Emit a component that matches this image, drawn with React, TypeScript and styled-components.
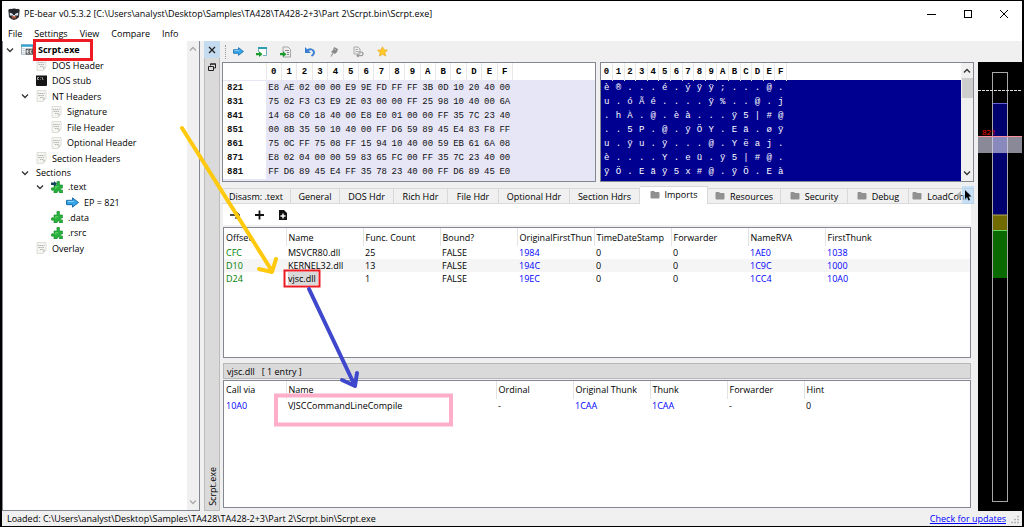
import React from "react";
import styled, { createGlobalStyle, css } from "styled-components";

const GlobalStyle = createGlobalStyle`
  *, *::before, *::after { box-sizing: border-box; }
  body { margin: 0; background: #000; }
  button { font: inherit; color: inherit; border: 0; padding: 0; background: none; }
  ul { list-style: none; margin: 0; padding: 0; }
`;

const Window = styled.div`
  position: relative;
  display: flex;
  flex-direction: column;
  height: 100vh;
  min-height: 420px;
  border: solid #000;
  border-width: 1px 2px 1px 2px;
  background: #f0f0f0;
  color: #000;
  font-family: "Open Sans", "Noto Sans", sans-serif;
  font-size: 9px;
  line-height: 13px;
  white-space: nowrap;
  overflow: hidden;
`;

const TitleBar = styled.header`
  display: flex;
  align-items: center;
  gap: 4px;
  height: 25px;
  padding-left: 6px;
  background: #fff;
`;

const Title = styled.h1`
  flex: 1;
  margin: 0;
  font-size: 9px;
  font-weight: 400;
`;

const WindowControls = styled.div`
  display: flex;
`;

const WindowButton = styled.button`
  display: grid;
  place-items: center;
  width: 36px;
  height: 24px;
`;

const MenuBar = styled.nav`
  display: flex;
  gap: 12px;
  height: 15px;
  padding-left: 6px;
  background: #fff;
`;

const Body = styled.div`
  display: flex;
  flex: 1;
  min-height: 0;
`;

const TreePanel = styled.aside`
  display: flex;
  width: 198px;
  border: solid #828790;
  border-width: 0 1px 1px 1px;
  background: #fff;
`;

const TreeLists = styled.div`
  flex: 1;
  padding-top: 1px;
`;

const TreeGroup = styled.ul<{ $height: number }>`
  display: grid;
  grid-auto-rows: 1fr;
  height: ${(p) => p.$height}px;
`;

const TreeRow = styled.li<{ $level: number; $bold?: boolean }>`
  display: flex;
  align-items: center;
  gap: 5px;
  padding-left: ${(p) => 3 + p.$level * 15}px;
  font-weight: ${(p) => (p.$bold ? 700 : 400)};
`;

const Twisty = styled.span`
  display: flex;
  width: 10px;
`;

const ScrollTrack = styled.div`
  display: flex;
  flex-direction: column;
  align-items: center;
  width: 12px;
  padding: 4px 0;
  background: #f0f0f0;
`;

const ScrollSpace = styled.div`
  flex: 1;
`;

const ScrollThumb = styled.div`
  width: 11px;
  height: 20px;
  margin-top: 3px;
  background: #cdcdcd;
`;

const DockStrip = styled.div`
  display: flex;
  flex-direction: column;
  align-items: center;
  width: 16px;
  margin-left: 4px;
  border: 1px solid #bcbcbc;
  border-top: 0;
  background: #dadada;
`;

const DockButton = styled.button<{ $hot?: boolean }>`
  display: grid;
  place-items: center;
  width: 16px;
  height: 17px;
  background: ${(p) => (p.$hot ? "#c5dcf0" : "transparent")};
`;

const DockLabel = styled.span`
  margin-top: auto;
  padding-top: 4px;
  writing-mode: vertical-rl;
  transform: rotate(180deg);
`;

const Workspace = styled.main`
  display: flex;
  flex: 1;
  flex-direction: column;
  min-width: 0;
  margin: 0 4px 3px 2px;
`;

const ToolBar = styled.div`
  display: flex;
  align-items: center;
  height: 21px;
  padding-left: 3px;
`;

const Grip = styled.span`
  height: 14px;
  border-left: 1px dotted #999;
`;

const ToolButton = styled.button`
  display: grid;
  place-items: center;
  width: 24px;
  height: 18px;
`;

const HexRow = styled.section`
  display: flex;
  gap: 4px;
  height: 120px;
`;

const HexPanel = styled.div<{ $fill: string }>`
  display: flex;
  flex: 1;
  min-width: 0;
  border: 1px solid #828790;
  background: linear-gradient(#fff 17px, ${(p) => p.$fill} 17px);
  overflow: hidden;
`;

const HexView = styled.div`
  flex: 1;
`;

const HexTable = styled.table<{ $width: number; $ascii?: boolean }>`
  width: ${(p) => p.$width}px;
  table-layout: fixed;
  border-collapse: collapse;
  font-family: "Liberation Mono", monospace;
  font-size: 9px;
  line-height: 14px;
  color: ${(p) => (p.$ascii ? "#fff" : "#111")};
  th, td { padding: 0; text-align: center; }
  td { height: 14px; }
  thead th { height: 18px; border-right: 1px solid #e8e8e8; color: #000; }
  tbody th { padding-left: 4px; text-align: left; background: #fff; }
`;

const OffsetHead = styled.th`
  width: 43px;
`;

const Tabs = styled.div`
  position: relative;
  display: flex;
  align-items: flex-end;
  height: 19px;
  margin-top: 3px;
`;

const Tab = styled.button<{ $width: number; $active?: boolean }>`
  display: flex;
  flex: none;
  align-items: center;
  justify-content: center;
  gap: 5px;
  width: ${(p) => p.$width}px;
  height: 16px;
  border: 1px solid #d9d9d9;
  border-left: 0;
  ${(p) =>
    p.$active &&
    css`
      height: 18px;
      padding-bottom: 2px;
      border-bottom: 0;
      background: #fff;
    `}
`;

const TabScroller = styled.div`
  position: absolute;
  right: 0;
  bottom: 0;
  display: flex;
  height: 18px;
`;

const ScrollerButton = styled.button<{ $hot?: boolean }>`
  display: grid;
  place-items: center;
  width: ${(p) => (p.$hot ? 12 : 8)}px;
  background: ${(p) => (p.$hot ? "rgba(150, 205, 250, 0.45)" : "transparent")};
`;

const TabPage = styled.section`
  display: flex;
  flex: 1;
  flex-direction: column;
  min-height: 0;
  margin-right: 3px;
  margin-left: 1px;
`;

const ImportTools = styled.div`
  display: flex;
  align-items: center;
  height: 21px;
  margin-bottom: 2px;
  background: #fff;
`;

const Frame = styled.div<{ $grow: number }>`
  flex: ${(p) => p.$grow} 1 0;
  min-height: 0;
  border: 1px solid #828790;
  background: #fff;
  overflow: hidden;
`;

const Caption = styled.div`
  height: 16px;
  margin: 5px 0 1px;
  padding: 0 3px;
  border: 1px solid #b8b8b8;
  background: #dadada;
  line-height: 15px;
  white-space: pre;
`;

const DataTable = styled.table`
  width: 100%;
  table-layout: fixed;
  border-collapse: collapse;
  th, td { padding: 0 2px; text-align: left; font-weight: 400; }
  th { height: 18px; border-right: 1px solid #e3e3e3; }
  th:last-child { border-right: 0; }
  td { height: 13px; }
  tbody tr:nth-child(even) { background: #f5f5f5; }
`;

const Col = styled.col<{ $width?: number }>`
  width: ${(p) => (p.$width ? `${p.$width}px` : "auto")};
`;

const Cell = styled.td<{ $tone: string }>`
  color: ${(p) => p.$tone};
`;

const Picked = styled.span`
  display: inline-block;
  padding-right: 2px;
  background: #d9d9d9;
`;

const MapPanel = styled.aside`
  width: 44px;
  margin-top: 21px;
  background: #000;
  overflow: hidden;
`;

const StatusBar = styled.footer`
  display: flex;
  align-items: center;
  height: 15px;
  padding: 0 2px 0 5px;
`;

const StatusText = styled.span`
  flex: 1;
`;

const UpdateLink = styled.a`
  margin-right: 4px;
  color: #0000ff;
  text-decoration: underline;
`;

const Marks = styled.svg`
  position: absolute;
  top: -1px;
  left: -2px;
  pointer-events: none;
`;

const BearIcon = () => (
  <svg width="12" height="12" viewBox="0 0 12 12">
    <circle cx="2.2" cy="2.6" r="1.9" fill="#333" />
    <circle cx="9.8" cy="2.6" r="1.9" fill="#333" />
    <path d="M.5 4Q2 .5 6 .5T11.500 4L11 9Q8.500 12 6 12T1 9Z" fill="#24262b" />
    <path d="M1.800 4.500 5 6V7.500H1.800zM10.200 4.500 7 6V7.500H10.200z" fill="#d9e4ee" />
    <path d="M3.500 8H8.500L8 10.500H4z" fill="#a5553c" />
    <path d="M4.800 7H7.200L6 9z" fill="#eee" />
  </svg>
);

const Chevron = ({ up, color = "#333" }: { up?: boolean; color?: string }) => (
  <svg width="8" height="8" viewBox="0 0 8 8">
    <path d={up ? "M1 5.500 4 2.500 7 5.500" : "M1 2.500 4 5.500 7 2.500"} fill="none" stroke={color} strokeWidth="1.300" />
  </svg>
);

const ExeIcon = () => (
  <svg width="12" height="12" viewBox="0 0 13 12">
    <rect x="0.500" y="0.500" width="12" height="10" fill="#fff" stroke="#9aa7b3" />
    <path d="M0 0H13V2.500H0z" fill="#35a3d0" />
    <path d="M1.500 4.500H4M1.500 6.500H4M1.500 8.500H4" stroke="#b7c6d2" />
    <rect x="5" y="4.500" width="8" height="6.500" fill="#555" />
    <path d="M6.500 6V9.500M8.500 6H7V9.500H8.500M7 7.700H8.500M10 6V9.500M12 6H10.500V9.500H12" stroke="#fff" strokeWidth="0.700" fill="none" />
  </svg>
);

const PageIcon = () => (
  <svg width="11" height="12" viewBox="0 0 11 12">
    <path d="M1 .5H10V8L7 11.500H1z" fill="#f4f4f0" stroke="#d8d8d4" strokeWidth="0.800" />
    <path d="M2 3.500H8.500M2.500 5.500H8.500M4 7.500H8" stroke="#b4b4b4" strokeDasharray="1.500 .5" />
    <path d="M10 8H7V11.500z" fill="#d2d2ce" />
  </svg>
);

const StubIcon = () => (
  <svg width="11" height="11" viewBox="0 0 11 11">
    <rect width="11" height="11" rx="1" fill="#151515" />
    <path d="M0 .5H11" stroke="#888" />
    <path d="M3 2.500H1.500V4.500H3M4.500 2.500V3M4.500 4V4.500M6 2 7 5" stroke="#ddd" strokeWidth="0.700" fill="none" />
  </svg>
);

const PuzzleIcon = ({ entry }: { entry?: boolean }) => (
  <svg width="12" height="12" viewBox="0 0 12 12">
    <path d="M4 4H6V2.500Q5.200 0 7.200 0T8.500 2.500V4H11.500V7Q9.500 6.500 9.500 8T11.500 9V12H8.500Q8.800 10 7.300 10T6 12H3V9Q0 10 0 8T3 7V4z" fill="#28b13c" stroke="#14852a" strokeWidth="0.600" />
    <path d="M4 5H8L4 8z" fill="#66d56c" opacity=".7" />
    {entry && <path d="M0 1.500H3V0L6 2.700 3 5.500V4H0z" fill="#16425f" />}
  </svg>
);

const ArrowIcon = ({ size }: { size: number }) => (
  <svg width={size} height={size - 2} viewBox="0 0 12 10">
    <path d="M.5 3H6V.7L11.500 5 6 9.300V7H.5z" fill="#35a5ea" stroke="#176aa8" strokeWidth="0.900" />
    <path d="M1.500 4H7" stroke="#8fd3fa" />
  </svg>
);

const GreenArrow = () => <path d="M0 7H3V5.200L6.500 8.200 3 11V9.300H0z" fill="#189a2c" />;

const FolderIcon = () => (
  <svg width="10" height="8" viewBox="0 0 10 8">
    <path d="M.5 1Q.5 0 1.500 0H4L5 1H8.500Q9.500 1 9.500 2V6.500Q9.500 7.500 8.500 7.500H1.500Q.5 7.500.5 6.500z" fill="#919191" />
  </svg>
);

type TreeItem = { text: string; level: number; open?: boolean; bold?: boolean; icon?: React.ReactNode };

const headerItems: TreeItem[] = [
  { text: "Scrpt.exe", level: 0, open: true, bold: true, icon: <ExeIcon /> },
  { text: "DOS Header", level: 1, icon: <PageIcon /> },
  { text: "DOS stub", level: 1, icon: <StubIcon /> },
  { text: "NT Headers", level: 1, open: true, icon: <PageIcon /> },
  { text: "Signature", level: 2, icon: <PageIcon /> },
  { text: "File Header", level: 2, icon: <PageIcon /> },
  { text: "Optional Header", level: 2, icon: <PageIcon /> },
  { text: "Section Headers", level: 1, icon: <PageIcon /> },
];

const sectionItems: TreeItem[] = [
  { text: ".text", level: 2, open: true, icon: <PuzzleIcon entry /> },
  { text: "EP = 821", level: 3, icon: <ArrowIcon size={13} /> },
  { text: ".data", level: 2, icon: <PuzzleIcon /> },
  { text: ".rsrc", level: 2, icon: <PuzzleIcon /> },
  { text: "Overlay", level: 1, icon: <PageIcon /> },
];

const renderItem = (item: TreeItem) => (
  <TreeRow key={item.text} $level={item.level} $bold={item.bold}>
    <Twisty>{item.open && <Chevron />}</Twisty>
    {item.icon}
    <span>{item.text}</span>
  </TreeRow>
);

const digits = "0123456789ABCDEF".split("");

const hexLines: [string, string][] = [
  ["821", "E8 AE 02 00 00 E9 9E FD FF FF 3B 0D 10 20 40 00"],
  ["831", "75 02 F3 C3 E9 2E 03 00 00 FF 25 98 10 40 00 6A"],
  ["841", "14 68 C0 18 40 00 E8 E0 01 00 00 FF 35 7C 23 40"],
  ["851", "00 8B 35 50 10 40 00 FF D6 59 89 45 E4 83 F8 FF"],
  ["861", "75 0C FF 75 08 FF 15 94 10 40 00 59 EB 61 6A 08"],
  ["871", "E8 02 04 00 00 59 83 65 FC 00 FF 35 7C 23 40 00"],
  ["881", "FF D6 89 45 E4 FF 35 78 23 40 00 FF D6 89 45 E0"],
];

const asciiLines = [
  "è®...é.ýÿÿ;...@.",
  "u.óÃé....ÿ%..@.j",
  ".hÀ.@.èà...ÿ5|#@",
  "..5P.@.ÿÖY.Eä.øÿ",
  "u.ÿu.ÿ...@.Yëaj.",
  "è....Y.eü.ÿ5|#@.",
  "ÿÖ.Eäÿ5x#@.ÿÖ.Eà",
];

const tabs: { text: string; width: number; folder?: boolean; active?: boolean }[] = [
  { text: "Disasm: .text", width: 69 },
  { text: "General", width: 49 },
  { text: "DOS Hdr", width: 54 },
  { text: "Rich Hdr", width: 54 },
  { text: "File Hdr", width: 51 },
  { text: "Optional Hdr", width: 71 },
  { text: "Section Hdrs", width: 70 },
  { text: "Imports", width: 68, folder: true, active: true },
  { text: "Resources", width: 73, folder: true },
  { text: "Security", width: 67, folder: true },
  { text: "Debug", width: 61, folder: true },
  { text: "LoadConfi", width: 65, folder: true },
];

const BLUE = "#0000ff";
const GREEN = "#008000";

type Column = { title: string; width?: number; tone?: string };

const libraryColumns: Column[] = [
  { title: "Offset", width: 62, tone: GREEN },
  { title: "Name", width: 77 },
  { title: "Func. Count", width: 77 },
  { title: "Bound?", width: 77 },
  { title: "OriginalFirstThun", width: 77, tone: BLUE },
  { title: "TimeDateStamp", width: 77 },
  { title: "Forwarder", width: 77 },
  { title: "NameRVA", width: 77, tone: BLUE },
  { title: "FirstThunk", tone: BLUE },
];

const libraryRows = [
  ["CFC", "MSVCR80.dll", "25", "FALSE", "1984", "0", "0", "1AE0", "1038"],
  ["D10", "KERNEL32.dll", "13", "FALSE", "194C", "0", "0", "1C9C", "1000"],
  ["D24", "vjsc.dll", "1", "FALSE", "19EC", "0", "0", "1CC4", "10A0"],
];

const functionColumns: Column[] = [
  { title: "Call via", width: 62, tone: BLUE },
  { title: "Name", width: 210 },
  { title: "Ordinal", width: 77 },
  { title: "Original Thunk", width: 77, tone: BLUE },
  { title: "Thunk", width: 77, tone: BLUE },
  { title: "Forwarder", width: 77 },
  { title: "Hint" },
];

const functionRows = [["10A0", "VJSCCommandLineCompile", "-", "1CAA", "1CAA", "-", "0"]];

const Grid = ({ columns, rows, picked }: { columns: Column[]; rows: string[][]; picked?: string }) => (
  <DataTable>
    <colgroup>
      {columns.map((c) => (
        <Col key={c.title} $width={c.width} />
      ))}
    </colgroup>
    <thead>
      <tr>
        {columns.map((c) => (
          <th key={c.title} scope="col">{c.title}</th>
        ))}
      </tr>
    </thead>
    <tbody>
      {rows.map((row) => (
        <tr key={row[0]}>
          {row.map((value, i) => (
            <Cell key={i} $tone={columns[i].tone ?? "#000"}>
              {value === picked ? <Picked>{value}</Picked> : value}
            </Cell>
          ))}
        </tr>
      ))}
    </tbody>
  </DataTable>
);

const SectionMap = () => (
  <svg width="44" height="449" viewBox="0 0 44 449">
    <rect x="14" y="41" width="16" height="112" fill="#00006e" />
    <rect x="14" y="153" width="16" height="15" fill="#706a00" />
    <rect x="14" y="168" width="16" height="48" fill="#0a6a00" />
    <path d="M14 41.500H30" stroke="#6464d8" />
    <path d="M14 153H30" stroke="#b5ad55" />
    <path d="M14 168.500H30" stroke="#62d862" />
    <rect x="14.500" y="10.500" width="15" height="429" fill="none" stroke="#a8a8a8" />
    <path d="M0 28.500H44" stroke="#ddd" strokeDasharray="3 1" />
    <text x="4" y="73" fill="#ff0000" fontSize="8">821</text>
    <rect y="74" width="44" height="17" fill="#d2d2ea" opacity=".65" />
    <path d="M0 74.500H44" stroke="#ff8f9c" />
  </svg>
);

export default function App() {
  return (
    <Window>
      <GlobalStyle />
      <TitleBar>
        <BearIcon />
        <Title>PE-bear v0.5.3.2 [C:\Users\analyst\Desktop\Samples\TA428\TA428-2+3\Part 2\Scrpt.bin\Scrpt.exe]</Title>
        <WindowControls>
          <WindowButton aria-label="Minimize">
            <svg width="10" height="10"><path d="M0 5.500H9" stroke="#000" /></svg>
          </WindowButton>
          <WindowButton aria-label="Maximize">
            <svg width="10" height="10"><rect x="1.500" y="1.500" width="7" height="7" fill="none" stroke="#000" /></svg>
          </WindowButton>
          <WindowButton aria-label="Close">
            <svg width="10" height="10"><path d="M1 1 9 9M9 1 1 9" stroke="#000" /></svg>
          </WindowButton>
        </WindowControls>
      </TitleBar>
      <MenuBar>
        {["File", "Settings", "View", "Compare", "Info"].map((m) => (
          <button key={m}>{m}</button>
        ))}
      </MenuBar>

      <Body>
        <TreePanel>
          <TreeLists>
            <TreeGroup $height={124}>{headerItems.map(renderItem)}</TreeGroup>
            <TreeGroup $height={13}>
              {renderItem({ text: "Sections", level: 1, open: true })}
            </TreeGroup>
            <TreeGroup $height={77}>{sectionItems.map(renderItem)}</TreeGroup>
          </TreeLists>
          <ScrollTrack>
            <Chevron up color="#aaa" />
            <ScrollSpace />
            <Chevron color="#aaa" />
          </ScrollTrack>
        </TreePanel>

        <DockStrip>
          <DockButton $hot aria-label="Close panel">
            <svg width="8" height="8"><path d="M1 1 7 7M7 1 1 7" stroke="#222" strokeWidth="1.300" /></svg>
          </DockButton>
          <DockButton aria-label="Float panel">
            <svg width="8" height="8">
              <path d="M2.500 2.500V1H7.500V5H6M2 1H8" fill="none" stroke="#222" />
              <path d="M.5 3.500H5.500V7.500H.5z" fill="none" stroke="#222" />
            </svg>
          </DockButton>
          <DockLabel>Scrpt.exe</DockLabel>
        </DockStrip>

        <Workspace>
          <ToolBar>
            <Grip />
            <ToolButton aria-label="Go to entry point"><ArrowIcon size={11} /></ToolButton>
            <ToolButton aria-label="Open in window">
              <svg width="12" height="12" viewBox="0 0 12 12">
                <path d="M2.500 6V2.500H10.500V9.500H7" fill="#fff" stroke="#70aebd" />
                <path d="M2 2H11" stroke="#2e9db4" strokeWidth="2" />
                <GreenArrow />
              </svg>
            </ToolButton>
            <ToolButton aria-label="Load file">
              <svg width="12" height="12" viewBox="0 0 12 12">
                <path d="M3 1H8L10.500 3.500V11H3z" fill="#eee" stroke="#888" strokeWidth="0.700" />
                <path d="M5 4.500H9M7 6.500H9M7 8.500H9" stroke="#888" />
                <GreenArrow />
              </svg>
            </ToolButton>
            <ToolButton aria-label="Undo">
              <svg width="12" height="12" viewBox="0 0 12 12">
                <path d="M3 4.500Q8 2 9.500 5T7.500 10" fill="none" stroke="#3a7fd2" strokeWidth="2" />
                <path d="M1 1V7H7z" fill="#3a7fd2" />
              </svg>
            </ToolButton>
            <ToolButton aria-label="Pin">
              <svg width="12" height="12" viewBox="0 0 12 12">
                <path d="M6 1 10 3 9 6 7 8 3 6 5 4z" fill="#888" />
                <path d="M5 7 3 10.500" stroke="#999" strokeWidth="1.200" />
                <path d="M6 3 8 4" stroke="#bbb" />
              </svg>
            </ToolButton>
            <ToolButton aria-label="Reload">
              <svg width="12" height="12" viewBox="0 0 12 12">
                <path d="M2 1H6L8 3V8H2z" fill="#eee" stroke="#999" strokeWidth="0.800" />
                <path d="M3.500 3.500H6M3.500 5.500H6" stroke="#aaa" />
                <path d="M6 6H9Q11 6 11 7.800T9 9.600H5M6.500 8 5 9.600 6.500 11" fill="none" stroke="#999" strokeWidth="1.200" />
              </svg>
            </ToolButton>
            <ToolButton aria-label="Favourites">
              <svg width="11" height="11" viewBox="0 0 12 12">
                <path d="M6 .8 7.600 4.200 11.400 4.600 8.600 7.200 9.400 11 6 9.100 2.600 11 3.400 7.200 .6 4.600 4.400 4.200z" fill="#ffc928" stroke="#e8a820" strokeWidth="0.700" />
              </svg>
            </ToolButton>
          </ToolBar>

          <HexRow>
            <HexPanel $fill="#e6e6f7">
              <HexView>
                <HexTable $width={290}>
                  <thead>
                    <tr>
                      <OffsetHead />
                      {digits.map((d) => <th key={d} scope="col">{d}</th>)}
                    </tr>
                  </thead>
                  <tbody>
                    {hexLines.map(([offset, bytes]) => (
                      <tr key={offset}>
                        <th scope="row">{offset}</th>
                        {bytes.split(" ").map((b, i) => <td key={i}>{b}</td>)}
                      </tr>
                    ))}
                  </tbody>
                </HexTable>
              </HexView>
            </HexPanel>
            <HexPanel $fill="#000090">
              <HexView>
                <HexTable $width={186} $ascii>
                  <thead>
                    <tr>{digits.map((d) => <th key={d} scope="col">{d}</th>)}</tr>
                  </thead>
                  <tbody>
                    {asciiLines.map((line) => (
                      <tr key={line}>{line.split("").map((c, i) => <td key={i}>{c}</td>)}</tr>
                    ))}
                  </tbody>
                </HexTable>
              </HexView>
              <ScrollTrack>
                <Chevron up />
                <ScrollThumb />
                <ScrollSpace />
                <Chevron />
              </ScrollTrack>
            </HexPanel>
          </HexRow>

          <Tabs role="tablist">
            {tabs.map((t) => (
              <Tab key={t.text} role="tab" aria-selected={!!t.active} $width={t.width} $active={t.active}>
                {t.folder && <FolderIcon />}
                {t.text}
              </Tab>
            ))}
            <TabScroller>
              <ScrollerButton aria-label="Scroll tabs left">
                <svg width="5" height="8"><path d="M5 0V8L0 4z" fill="#999" opacity=".7" /></svg>
              </ScrollerButton>
              <ScrollerButton $hot aria-label="Scroll tabs right">
                <svg width="8" height="12" viewBox="0 0 8 12">
                  <path d="M1 1V10L3 8 4.500 11.500 6 11 4.500 7.500H7.500z" fill="#000" />
                </svg>
              </ScrollerButton>
            </TabScroller>
          </Tabs>

          <TabPage>
            <ImportTools>
              <ToolButton aria-label="Follow">
                <svg width="10" height="10"><path d="M0 5H9M5.500 1.500 9 5 5.500 8.500" fill="none" stroke="#111" strokeWidth="1.600" /></svg>
              </ToolButton>
              <ToolButton aria-label="Add import">
                <svg width="10" height="10"><path d="M1 5H10M5.500 .5V9.500" stroke="#111" strokeWidth="1.800" /></svg>
              </ToolButton>
              <ToolButton aria-label="Add file">
                <svg width="8" height="10">
                  <path d="M0 0H5L8 3V10H0z" fill="#111" />
                  <path d="M1.500 6H6.500M4 3.500V8.500" stroke="#fff" strokeWidth="1.400" />
                </svg>
              </ToolButton>
            </ImportTools>
            <Frame $grow={131}>
              <Grid columns={libraryColumns} rows={libraryRows} picked="vjsc.dll" />
            </Frame>
            <Caption>{"vjsc.dll   [ 1 entry ]"}</Caption>
            <Frame $grow={128}>
              <Grid columns={functionColumns} rows={functionRows} />
            </Frame>
          </TabPage>
        </Workspace>

        <MapPanel>
          <SectionMap />
        </MapPanel>
      </Body>

      <StatusBar>
        <StatusText>Loaded: C:\Users\analyst\Desktop\Samples\TA428\TA428-2+3\Part 2\Scrpt.bin\Scrpt.exe</StatusText>
        <UpdateLink href="#updates">Check for updates</UpdateLink>
        <svg width="10" height="10">
          <path d="M7 2.500H9M4 5.500H6M7 5.500H9M1 8.500H3M4 8.500H6M7 8.500H9" stroke="#b5b5b5" strokeWidth="1.500" />
        </svg>
      </StatusBar>

      <Marks width="460" height="440" viewBox="0 0 460 440" fill="none">
        <rect x="34.500" y="40.500" width="57" height="19" stroke="#ed1c24" strokeWidth="3" />
        <rect x="284.500" y="270.500" width="35" height="16" stroke="#ed1c24" strokeWidth="2" />
        <rect x="276" y="395.500" width="175" height="29" stroke="#ffaec9" strokeWidth="4" />
        <g strokeWidth="4" strokeLinecap="round" strokeLinejoin="round">
          <path d="M182 128 272 271M259 269 272 272 276 259" stroke="#ffc90e" />
          <path d="M309 289 355 386M342 380 355 386 357 373" stroke="#3f48cc" />
        </g>
      </Marks>
    </Window>
  );
}
